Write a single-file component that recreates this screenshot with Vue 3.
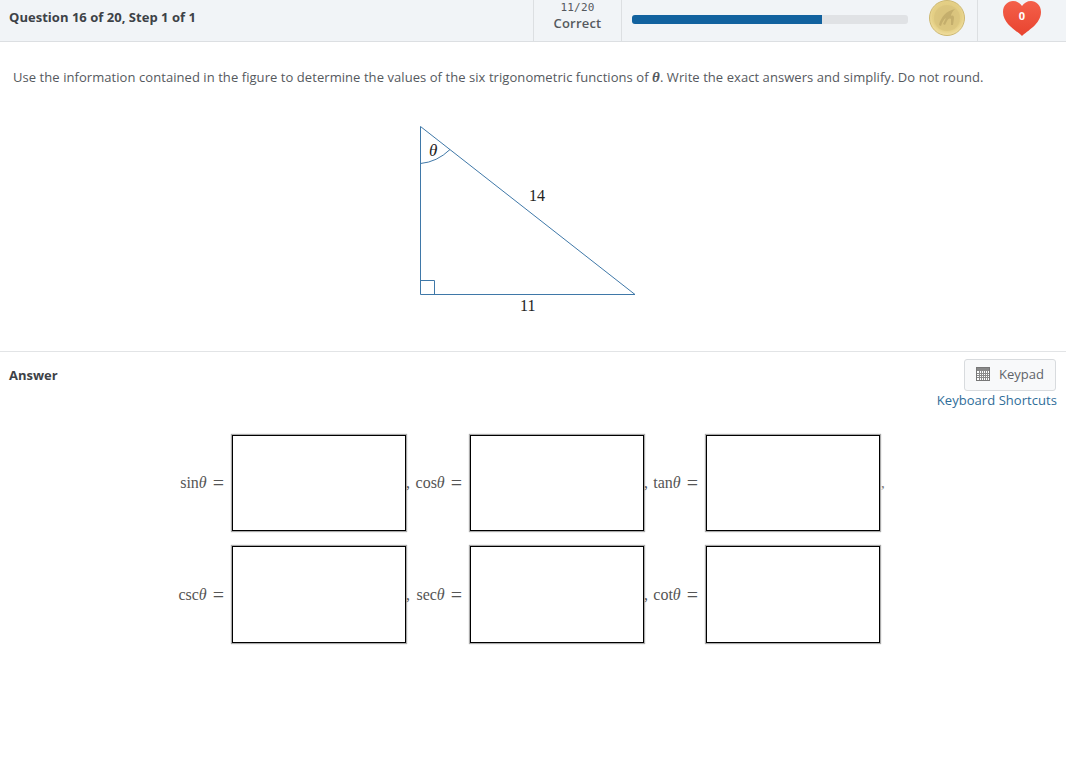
<script setup>
const rows = [
  [
    { fn: 'sin', lead: '' },
    { fn: 'cos', lead: ',' },
    { fn: 'tan', lead: ',' },
  ],
  [
    { fn: 'csc', lead: '' },
    { fn: 'sec', lead: ',' },
    { fn: 'cot', lead: ',' },
  ],
]
</script>

<template>
  <div class="page">
    <header class="topbar">
      <div class="title">Question 16 of 20, Step 1 of 1</div>
      <div class="score">
        <span class="score-num">11/20</span>
        <span class="score-label">Correct</span>
      </div>
      <div class="progress-cell">
        <div class="track"><div class="fill"></div></div>
      </div>
      <div class="coin-cell">
        <svg width="38" height="38" viewBox="0 0 38 38">
          <defs>
            <radialGradient id="coinG" cx="50%" cy="45%" r="55%">
              <stop offset="0%" stop-color="#dcc67e" />
              <stop offset="75%" stop-color="#e4cf85" />
              <stop offset="100%" stop-color="#f2e0a2" />
            </radialGradient>
          </defs>
          <circle cx="19" cy="19" r="17.5" fill="url(#coinG)" stroke="#cdb872" stroke-width="1" />
          <circle cx="19" cy="19" r="13" fill="#d6c07a" opacity="0.55" />
          <path d="M11 26 C13 18 18 12 27 10 C24 13 23 15 23 17 C25 16 26 17 26 19 L25 26 L23 26 L23 20 C21 19 20 20 19 22 L17 26 L15 25 L18 19 C16 20 14 23 13 27 Z" fill="#c4ae6c" />
        </svg>
      </div>
      <div class="heart-cell">
        <svg width="40" height="38" viewBox="0 0 40 38">
          <defs>
            <linearGradient id="heartG" x1="0" y1="0" x2="0" y2="1">
              <stop offset="0%" stop-color="#f4604a" />
              <stop offset="100%" stop-color="#e8432f" />
            </linearGradient>
          </defs>
          <path d="M20 36 C15 31 1 24 1 12 C1 5 6 1 11 1 C15 1 18 3 20 6 C22 3 25 1 29 1 C34 1 39 5 39 12 C39 24 25 31 20 36 Z" fill="url(#heartG)" />
        </svg>
        <span class="heart-num">0</span>
      </div>
    </header>

    <section class="question">
      <p class="prompt">Use the information contained in the figure to determine the values of the six trigonometric functions of <em class="theta-inline">θ</em>. Write the exact answers and simplify. Do not round.</p>
      <div class="figure">
        <svg width="230" height="200" viewBox="0 0 230 200">
          <g fill="none" stroke="#3f78a8" stroke-width="1">
            <path d="M5.5 11.5 L5.5 179.5 L220 179.5 Z" />
            <path d="M5.5 165.5 H19.5 V179.5" />
            <path d="M5.5 48.5 Q22 47 35 34.5" />
          </g>
          <text x="14" y="41" class="fig-theta">θ</text>
          <text x="114" y="86" class="fig-num">14</text>
          <text x="105" y="196" class="fig-num">11</text>
        </svg>
      </div>
    </section>

    <section class="answer">
      <div class="answer-head">
        <div class="answer-title">Answer</div>
        <div class="tools">
          <button class="keypad" type="button">
            <svg width="14" height="14" viewBox="0 0 14 14">
              <rect x="0.5" y="0.5" width="13" height="13" fill="#fff" stroke="#777" />
              <rect x="1" y="1" width="12" height="3" fill="#888" />
              <path d="M1 6.5H13M1 8.5H13M1 10.5H13M3.5 4V13M5.5 4V13M7.5 4V13M9.5 4V13M11.5 4V13" stroke="#8a8a8a" stroke-width="1" fill="none" />
            </svg>
            <span>Keypad</span>
          </button>
          <a class="shortcuts">Keyboard Shortcuts</a>
        </div>
      </div>

      <div class="grid">
        <template v-for="(row, r) in rows" :key="r">
          <template v-for="cell in row" :key="cell.fn">
            <div class="label">
              <span v-if="cell.lead" class="comma">{{ cell.lead }}</span>
              <span class="fn">{{ cell.fn }}<i>θ</i></span>
              <span class="eq">=</span>
            </div>
            <div class="box"></div>
          </template>
          <div class="tail"><span v-if="r === 0">,</span></div>
        </template>
      </div>
    </section>
  </div>
</template>

<style>
html, body { margin: 0; background: #fff; }
</style>

<style scoped>
.page {
  width: 1066px;
  min-height: 781px;
  background: #fff;
  font-family: "Open Sans", sans-serif;
  color: #4a4f55;
  overflow: hidden;
}
.topbar {
  height: 41px;
  display: flex;
  background: #f1f4f7;
  border-bottom: 1px solid #dcdfe2;
}
.title {
  width: 524px;
  padding-left: 9px;
  font-size: 13px;
  font-weight: 700;
  letter-spacing: 0.03px;
  line-height: 35px;
  color: #3d4247;
}
.score {
  width: 87px;
  border-left: 1px solid #dcdfe2;
  border-right: 1px solid #dcdfe2;
  display: flex;
  flex-direction: column;
  align-items: center;
  text-align: center;
  padding-top: 1px;
}
.score-num {
  font-family: "DejaVu Sans Mono", monospace;
  font-size: 11px;
  letter-spacing: 0.2px;
  line-height: 14px;
  color: #55595e;
}
.score-label {
  font-size: 13px;
  font-weight: 600;
  letter-spacing: 0.2px;
  line-height: 16px;
  color: #55595e;
}
.progress-cell {
  width: 287px;
  padding: 15px 0 0 10px;
  box-sizing: border-box;
}
.track {
  width: 276px;
  height: 9px;
  background: #e0e2e5;
  border-radius: 3px;
  overflow: hidden;
}
.fill { width: 190px; height: 100%; background: #12629f; }
.coin-cell {
  width: 68px;
  display: flex;
  justify-content: center;
  padding-left: 7px;
  box-sizing: border-box;
  height: 40px;
  margin-top: -1px;
}
.heart-cell {
  position: relative;
  flex: 1;
  border-left: 1px solid #dcdfe2;
  display: flex;
  justify-content: center;
}
.heart-num {
  position: absolute;
  left: 0;
  right: 0;
  top: 8px;
  text-align: center;
  color: #fff;
  font-size: 11px;
  line-height: 16px;
  font-weight: 700;
}
.question { height: 309px; border-bottom: 1px solid #e2e4e6; }
.prompt {
  margin: 0;
  padding: 26px 0 0 13px;
  font-size: 13px;
  letter-spacing: 0.062px;
  line-height: 18px;
  color: #55595e;
  white-space: nowrap;
}
.theta-inline {
  font-family: "Liberation Serif", serif;
  font-size: 15px;
  font-weight: 700;
  font-style: italic;
}
.figure { padding: 29px 0 0 415px; line-height: 0; }
.fig-theta {
  font-family: "Liberation Serif", serif;
  font-style: italic;
  font-size: 17px;
  fill: #222;
}
.fig-num {
  font-family: "Liberation Serif", serif;
  font-size: 16px;
  fill: #222;
}
.answer-head {
  display: flex;
  justify-content: space-between;
  padding: 7px 10px 0 9px;
}
.answer-title {
  font-size: 13px;
  font-weight: 700;
  line-height: 33px;
  color: #3d4247;
}
.tools { display: flex; flex-direction: column; align-items: flex-end; }
.keypad {
  width: 92px;
  height: 32px;
  display: flex;
  align-items: center;
  gap: 9px;
  padding: 0 0 2px 11px;
  border: 1px solid #d8dbde;
  border-radius: 3px;
  background: #f8f9fa;
  color: #5f6469;
  font-family: "Open Sans", sans-serif;
  font-size: 13px;
}
.shortcuts {
  margin-right: -1px;
  font-size: 13px;
  letter-spacing: 0.05px;
  line-height: 18px;
  color: #2f6d99;
}
.grid {
  display: grid;
  grid-template-columns: 62px 174px 64px 174px 62px 174px auto;
  grid-template-rows: 96px 97px;
  row-gap: 15px;
  margin: 26px 0 0 170px;
  justify-content: start;
}
.label {
  display: flex;
  align-items: center;
  justify-content: flex-end;
  gap: 6px;
  padding: 0 8px 0 0;
  font-family: "Liberation Serif", serif;
  font-size: 16px;
  color: #555;
  position: relative;
}
.fn i { font-style: italic; }
.comma {
  position: absolute;
  left: 0;
  top: 50%;
  margin-top: -9px;
}
.eq { font-size: 20px; line-height: 18px; }
.box {
  box-sizing: border-box;
  border: 1px solid #000;
  background: #fff;
  box-shadow: 0 0 1px 1px #aaa;
}
.tail {
  font-family: "Liberation Serif", serif;
  font-size: 15px;
  color: #777;
  display: flex;
  align-items: center;
  padding-left: 1px;
}
</style>
